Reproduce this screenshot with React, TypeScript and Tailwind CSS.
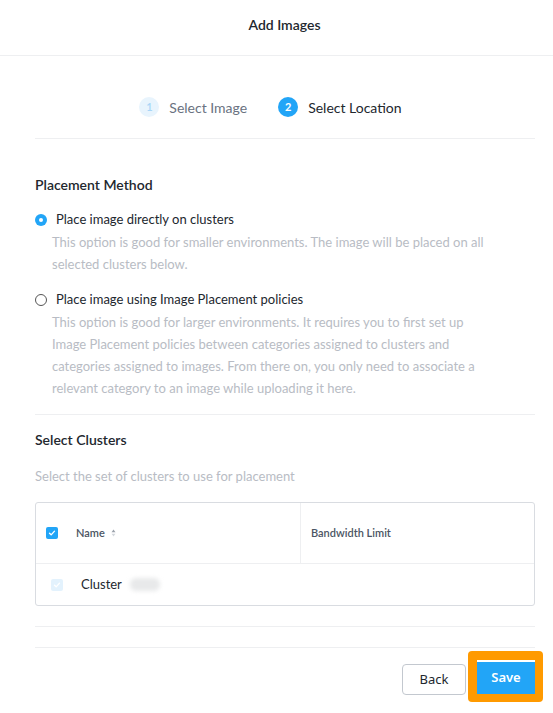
import { type ReactElement } from "react";

function CheckIcon({ className }: { className?: string }): ReactElement {
  return (
    <svg viewBox="0 0 12 12" className={className} fill="none">
      <path
        d="M3 6.2 5 8.2 9 3.8"
        stroke="currentColor"
        strokeWidth="1.6"
        strokeLinecap="round"
        strokeLinejoin="round"
      />
    </svg>
  );
}

function RadioOption({
  checked,
  label,
  description,
}: {
  checked: boolean;
  label: string;
  description: string;
}): ReactElement {
  return (
    <div className="flex flex-col">
      <div className="flex items-center h-[22px]">
        {checked ? (
          <span className="flex items-center justify-center size-[12px] rounded-full bg-[#22a5f7]">
            <span className="size-[4px] rounded-full bg-white" />
          </span>
        ) : (
          <span className="size-[12px] rounded-full border border-[#555]" />
        )}
        <span className="ml-[9px] text-[13px] text-[#22272e]">{label}</span>
      </div>
      <p className="pl-[17px] pr-[37px] text-[13px] leading-[22px] text-[#b8bcc4]">
        {description}
      </p>
    </div>
  );
}

export default function App(): ReactElement {
  return (
    <div className="w-[553px] h-[713px] bg-white font-['Lato',sans-serif] text-[#22272e] overflow-hidden">
      {/* header */}
      <div className="h-[56px] flex items-center justify-center border-b border-[#eeeff1] pb-[6px] pl-[16px]">
        <span className="text-[14px] font-semibold">Add Images</span>
      </div>

      <div className="pl-[35px] pr-[18px]">
        {/* steps */}
        <div className="h-[83px] flex items-center justify-center border-b border-[#eeeff1] pt-[20px] pr-[29px]">
          <div className="flex items-center">
            <span className="size-[20px] rounded-full bg-[#e8f4fd] text-[#a9d6f7] text-[11px] font-semibold flex items-center justify-center">
              1
            </span>
            <span className="ml-[10px] text-[14px] text-[#6a7281]">
              Select Image
            </span>
          </div>
          <div className="flex items-center ml-[31px]">
            <span className="size-[20px] rounded-full bg-[#22a5f7] text-white text-[11px] font-bold flex items-center justify-center">
              2
            </span>
            <span className="ml-[10px] text-[14px] text-[#22272e]">
              Select Location
            </span>
          </div>
        </div>

        {/* placement method */}
        <div className="pt-[35px] pb-[15px] border-b border-[#eeeff1]">
          <h3 className="text-[14px] font-semibold leading-[22px]">
            Placement Method
          </h3>
          <div className="mt-[13px] flex flex-col gap-[14px]">
            <RadioOption
              checked
              label="Place image directly on clusters"
              description="This option is good for smaller environments. The image will be placed on all selected clusters below."
            />
            <RadioOption
              checked={false}
              label="Place image using Image Placement policies"
              description="This option is good for larger environments. It requires you to first set up Image Placement policies between categories assigned to clusters and categories assigned to images. From there on, you only need to associate a relevant category to an image while uploading it here."
            />
          </div>
        </div>

        {/* select clusters */}
        <div className="pt-[14px] pb-[20px] border-b border-[#eeeff1]">
          <h3 className="text-[14px] font-semibold leading-[22px]">
            Select Clusters
          </h3>
          <p className="mt-[14px] text-[13px] leading-[22px] text-[#b8bcc4]">
            Select the set of clusters to use for placement
          </p>
          <div className="mt-[15px] border border-[#d9dce1] rounded-[3px]">
            <div className="flex h-[61px] border-b border-[#eeeff1]">
              <div className="w-[265px] flex items-center border-r border-[#eeeff1] pl-[10px]">
                <span className="size-[12px] rounded-[2px] bg-[#22a5f7] text-white flex items-center justify-center">
                  <CheckIcon className="size-[10px]" />
                </span>
                <span className="ml-[18px] text-[11px] font-semibold text-[#4b5563]">
                  Name
                </span>
                <svg viewBox="0 0 6 10" className="ml-[6px] w-[5px] h-[8px] text-[#9aa1ab]">
                  <path d="M3 0.5 5.5 4H0.5Z" fill="currentColor" />
                  <path d="M3 9.5 5.5 6H0.5Z" fill="#d4d8dd" />
                </svg>
              </div>
              <div className="flex-1 flex items-center pl-[10px]">
                <span className="text-[11px] font-semibold text-[#4b5563]">
                  Bandwidth Limit
                </span>
              </div>
            </div>
            <div className="flex items-center h-[41px] pl-[15px]">
              <span className="size-[12px] rounded-[2px] bg-[#e3f2fd] text-white flex items-center justify-center">
                <CheckIcon className="size-[10px]" />
              </span>
              <span className="ml-[18px] text-[13px] text-[#22272e]">
                Cluster
              </span>
              <span className="ml-[8px] w-[30px] h-[13px] rounded-[6px] bg-[#e8e9ea] blur-[2px]" />
            </div>
          </div>
        </div>

        <div className="h-[21px] border-b border-[#eeeff1]" />

        {/* footer */}
        <div className="flex justify-end items-start gap-[1px] pt-[3px] mr-[-8px]">
          <button
            type="button"
            className="h-[31px] w-[64px] rounded-[4px] border border-[#c3c8cf] text-[13px] text-[#22272e] mt-[13px] mr-[1px] font-['Noto_Sans',sans-serif]"
          >
            Back
          </button>
          <div className="rounded-[4px] bg-[#ff9a00] pt-[9px] pb-[8px] pl-[9px] pr-[8px]">
            <div className="w-[58px] h-[34px] bg-[#22a5f7] border-t-[2px] border-white flex items-center justify-center">
              <span className="text-[13px] font-semibold text-white font-['Noto_Sans',sans-serif]">
                Save
              </span>
            </div>
          </div>
        </div>
      </div>
    </div>
  );
}
